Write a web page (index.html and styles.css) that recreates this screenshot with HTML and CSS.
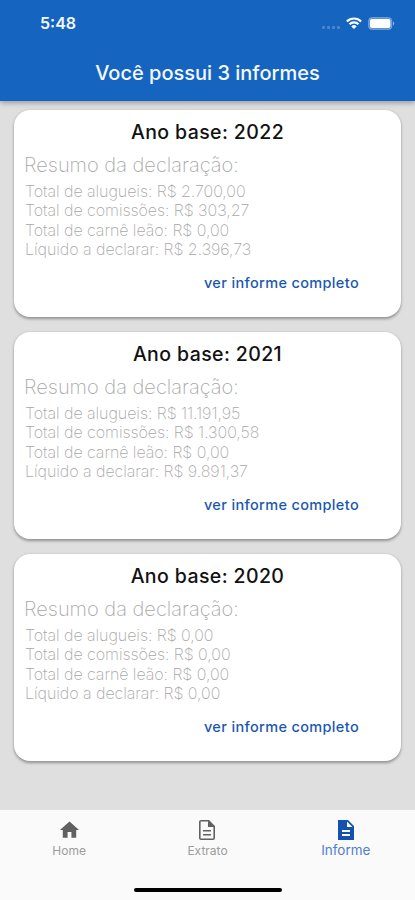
FILE: index.html
```html
<!DOCTYPE html>
<html lang="pt-BR">
<head>
    <meta charset="UTF-8">
    <meta name="viewport" content="width=device-width, initial-scale=1.0">
    <title>Informes</title>
    <link rel="stylesheet" href="styles.css">
</head>
<body>
    <header class="app-bar">
        <div class="status-bar">
            <span class="time">5:48</span>
            <div class="status-icons">
                <div class="signal"><i></i><i></i><i></i><i></i></div>
                <svg class="wifi" width="16" height="12" viewBox="0 0 16 12" fill="none" stroke="#fff" stroke-width="2.1">
                    <path d="M0.9 4.4a10 10 0 0 1 14.2 0"/>
                    <path d="M3.5 7.2a6.4 6.4 0 0 1 9 0"/>
                    <path d="M8 12L5.4 9.4a3.7 3.7 0 0 1 5.2 0z" fill="#fff" stroke="none"/>
                </svg>
                <svg class="battery" width="27" height="13" viewBox="0 0 27 13">
                    <rect x="0.5" y="0.5" width="23.4" height="12" rx="3.6" fill="#fff" fill-opacity="0.3" stroke="#fff" stroke-opacity="0.25"/>
                    <rect x="2" y="2" width="20.4" height="9" rx="2" fill="#fff"/>
                    <path d="M25 4.5v4c1.7-.7 1.7-3.3 0-4z" fill="#fff" fill-opacity="0.5"/>
                </svg>
            </div>
        </div>
        <h1>Você possui 3 informes</h1>
    </header>

    <main class="list">
        <section class="card">
            <h2>Ano base: 2022</h2>
            <h3>Resumo da declaração:</h3>
            <ul>
                <li>Total de alugueis: R$ 2.700,00</li>
                <li>Total de comissões: R$ 303,27</li>
                <li>Total de carnê leão: R$ 0,00</li>
                <li>Líquido a declarar: R$ 2.396,73</li>
            </ul>
            <a class="link">ver informe completo</a>
        </section>
        <section class="card">
            <h2>Ano base: 2021</h2>
            <h3>Resumo da declaração:</h3>
            <ul>
                <li>Total de alugueis: R$ 11.191,95</li>
                <li>Total de comissões: R$ 1.300,58</li>
                <li>Total de carnê leão: R$ 0,00</li>
                <li>Líquido a declarar: R$ 9.891,37</li>
            </ul>
            <a class="link">ver informe completo</a>
        </section>
        <section class="card">
            <h2>Ano base: 2020</h2>
            <h3>Resumo da declaração:</h3>
            <ul>
                <li>Total de alugueis: R$ 0,00</li>
                <li>Total de comissões: R$ 0,00</li>
                <li>Total de carnê leão: R$ 0,00</li>
                <li>Líquido a declarar: R$ 0,00</li>
            </ul>
            <a class="link">ver informe completo</a>
        </section>
    </main>

    <nav class="tab-bar">
        <a class="tab">
            <svg width="23" height="23" viewBox="0 0 24 24"><path d="M10 20v-6h4v6h5v-8h3L12 3 2 12h3v8z"/></svg>
            <span>Home</span>
        </a>
        <a class="tab">
            <svg width="24" height="24" viewBox="0 0 24 24"><path d="M8 16h8v1.500H8zm0-4h8v1.500H8zm6-10H6c-1.100 0-2 .9-2 2v16c0 1.100.9 2 2 2h12c1.100 0 2-.9 2-2V8l-6-6zm4.400 18.400H5.600V3.600H13V9h5.400v11.400z"/></svg>
            <span>Extrato</span>
        </a>
        <a class="tab active">
            <svg width="24" height="24" viewBox="0 0 24 24"><path d="M14 2H4v20h16V8l-6-6zm2 16H8v-2h8v2zm0-4H8v-2h8v2zm-3-5V3.500L18.500 9H13z"/></svg>
            <span>Informe</span>
        </a>
    </nav>
    <div class="home-indicator"></div>
</body>
</html>
```
FILE: styles.css
```css
* {
    box-sizing: border-box;
    margin: 0;
    padding: 0;
}
body {
    height: 900px;
    display: flex;
    flex-direction: column;
    font-family: Inter, "Liberation Sans", sans-serif;
    background-color: #dfdfdf;
    overflow: hidden;
}
.app-bar {
    position: relative;
    height: 101px;
    flex-shrink: 0;
    color: #f4f8ff;
    background-color: #1565c0;
    box-shadow: 0 2px 5px rgba(0, 0, 0, 0.3);
}
.status-bar {
    display: flex;
    justify-content: space-between;
    height: 46px;
    padding: 0 20px 0 40px;
    align-items: center;
}
.time {
    font-size: 16px;
    font-weight: 600;
    line-height: 20px;
}
.status-icons {
    display: flex;
    align-items: center;
}
.signal {
    display: flex;
    gap: 2px;
    margin: 8px 6px 0 0;
}
.signal i {
    width: 3px;
    height: 3px;
    border-radius: 1px;
    background-color: rgba(255, 255, 255, 0.22);
}
.battery {
    margin-left: 6px;
}
h1 {
    font-size: 20px;
    font-weight: 550;
    line-height: 26px;
    margin-top: 14px;
    text-align: center;
}
.list {
    flex: 1;
    display: flex;
    flex-direction: column;
    gap: 15px;
    padding: 9px 14px;
}
.card {
    height: 207px;
    padding: 10px;
    background-color: #fff;
    border-radius: 16px;
    box-shadow: 0 1.5px 3px rgba(0, 0, 0, 0.35);
}
h2 {
    font-size: 19.5px;
    font-weight: 550;
    line-height: 24px;
    letter-spacing: 0.4px;
    text-align: center;
    color: #111;
}
h3 {
    margin-top: 9px;
    font-size: 20px;
    font-weight: 200;
    line-height: 24px;
    color: #a8a8a8;
}
ul {
    margin-top: 5px;
    padding-left: 1px;
    list-style: none;
    font-size: 16px;
    font-weight: 200;
    line-height: 19.3px;
    letter-spacing: -0.05px;
    color: #a8a8a8;
}
.link {
    display: block;
    margin: 14px 32px 0 0;
    font-size: 14.5px;
    font-weight: 550;
    line-height: 20px;
    letter-spacing: 0.35px;
    text-align: right;
    color: #1a57b0;
}
.tab-bar {
    display: flex;
    height: 90px;
    flex-shrink: 0;
    padding-top: 8px;
    background-color: #fafafa;
}
.tab {
    flex: 1;
    display: flex;
    flex-direction: column;
    align-items: center;
    font-size: 12px;
    line-height: 16px;
    color: #9c9c9c;
}
.tab svg {
    height: 24px;
    fill: #616161;
}
.tab span {
    margin-top: 1px;
}
.tab.active {
    font-size: 13.5px;
    color: #517fc9;
}
.tab.active span {
    margin-top: 0;
}
.tab.active svg {
    fill: #1450ae;
}
/* sits over the tab bar */
.home-indicator {
    position: absolute;
    left: 134px;
    bottom: 8px;
    width: 148px;
    height: 4px;
    border-radius: 2px;
    background-color: #000;
}
```
